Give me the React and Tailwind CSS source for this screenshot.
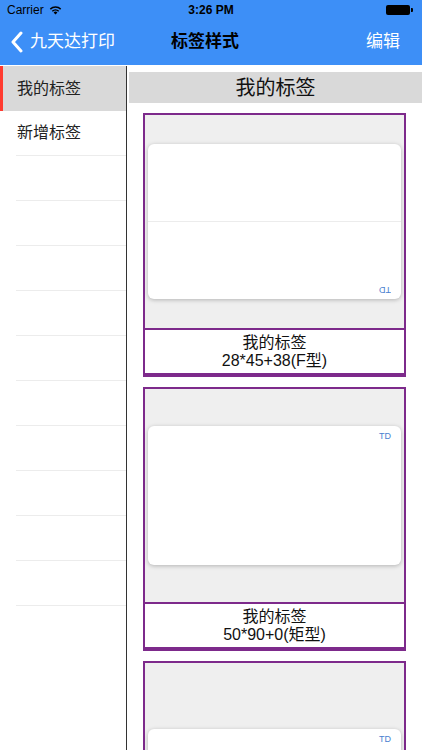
import React from 'react';

const font = { fontFamily: '"Liberation Sans", "Noto Sans CJK SC", sans-serif' };

const labels = [
  { name: '我的标签', size: '28*45+38(F型)', h: 'h-[155px]', split: true, flipped: true },
  { name: '我的标签', size: '50*90+0(矩型)', h: 'h-[139px]', split: false, flipped: false },
  { name: '', size: '', h: 'h-[81px]', split: false, flipped: false },
];

const menu = ['我的标签', '新增标签', '', '', '', '', '', '', '', '', '', ''];

const Wifi = () => (
  <svg width="13" height="10" viewBox="0 0 13 10" className="ml-[5px]">
    <path d="M6.5 9.5 L4.6 7.5 A2.7 2.7 0 0 1 8.4 7.5 Z" fill="#000" />
    <path d="M3.3 6.2 A4.6 4.6 0 0 1 9.7 6.2" stroke="#000" strokeWidth="1.5" fill="none" />
    <path d="M1.3 4.1 A7.4 7.4 0 0 1 11.7 4.1" stroke="#000" strokeWidth="1.5" fill="none" />
  </svg>
);

const Battery = () => (
  <div className="flex items-center">
    <div className="w-[24px] h-[10px] bg-black rounded-[2px]" />
    <div className="w-[2px] h-[4px] bg-black rounded-r-[1px] ml-[1px]" />
  </div>
);

const LabelCard = ({ item }) => (
  <div className="border-2 border-b-4 border-[#7d2a8b] bg-white">
    <div className="h-[213px] bg-[#efefef] flex items-center px-[3px]">
      <div className={`relative w-full ${item.h} bg-white rounded-[6px] shadow-[0_1px_4px_rgba(0,0,0,0.25)] flex flex-col`}>
        {item.split && (
          <>
            <div className="flex-1 border-b border-[#ececec]" />
            <div className="flex-1" />
          </>
        )}
        <span
          className={`absolute right-[10px] text-[9px] leading-none text-[#4a7fd0] ${
            item.flipped ? 'bottom-[5px] rotate-180' : 'top-[6px]'
          }`}
        >
          TD
        </span>
      </div>
    </div>
    <div className="h-[45px] border-t-2 border-[#7d2a8b] flex flex-col items-center justify-center text-[16px] leading-[18px] text-[#111]">
      {item.name && <span>{item.name}</span>}
      {item.size && <span>{item.size}</span>}
    </div>
  </div>
);

export default function App() {
  return (
    <div className="w-[422px] h-[750px] overflow-hidden flex flex-col bg-white" style={font}>
      {/* top bars */}
      <div className="bg-[#3d8ff7] h-[65px] shrink-0">
        <div className="h-5 flex items-center justify-between px-[7px] text-[12px] text-black">
          <div className="flex items-center w-[100px]">
            <span>Carrier</span>
            <Wifi />
          </div>
          <span className="font-bold">3:26 PM</span>
          <div className="w-[100px] flex justify-end pr-[2px]">
            <Battery />
          </div>
        </div>
        <div className="h-[44px] flex items-center justify-between pl-[10px] pr-[22px]">
          <div className="flex items-center w-[120px] text-white text-[17px]">
            <svg width="14" height="22" viewBox="0 0 14 22" className="mr-[6px]">
              <path d="M11 2 L3 11 L11 20" stroke="#fff" strokeWidth="3" fill="none" strokeLinecap="round" strokeLinejoin="round" />
            </svg>
            <span>九天达打印</span>
          </div>
          <span className="text-[17px] font-bold text-black">标签样式</span>
          <div className="w-[120px] text-right text-white text-[17px]">编辑</div>
        </div>
      </div>

      <div className="flex flex-1 min-h-0 pt-[1px]">
        {/* sidebar */}
        <div className="w-[127px] shrink-0 border-r border-[#333]">
          {menu.map((m, i) =>
            i === 0 ? (
              <div key={i} className="h-[45px] bg-[#d9d9d9] border-l-[3px] border-[#ff3b30] flex items-center pl-[14px] text-[16px] text-[#222]">
                {m}
              </div>
            ) : (
              <div key={i} className="h-[45px] ml-[16px] border-b border-[#ececec] flex items-center pl-[1px] text-[16px] text-[#222]">
                {m}
              </div>
            )
          )}
        </div>

        {/* content */}
        <div className="flex-1 pl-[2px] pt-[6px] overflow-hidden">
          <div className="h-[31px] bg-[#d9d9d9] flex items-center justify-center text-[20px] text-[#111]">我的标签</div>
          <div className="pl-[14px] pr-[16px] pt-[10px] flex flex-col gap-[10px]">
            {labels.map((l, i) => (
              <LabelCard key={i} item={l} />
            ))}
          </div>
        </div>
      </div>
    </div>
  );
}
